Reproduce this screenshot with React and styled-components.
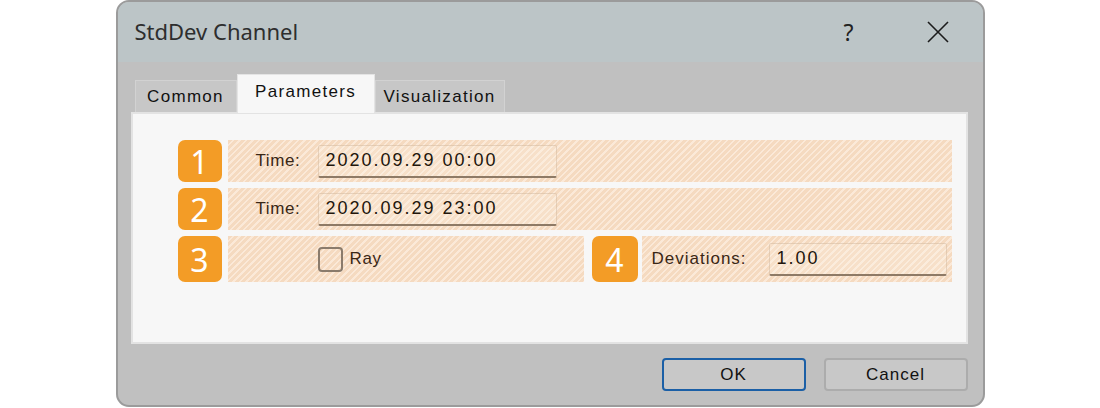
import React from "react";
import styled, { createGlobalStyle } from "styled-components";

const GlobalStyle = createGlobalStyle`
  body {
    margin: 0;
    background: #ffffff;
    font-family: "Liberation Sans", Arial, sans-serif;
  }
`;

const Page = styled.div`
  display: flex;
  justify-content: center;
  height: 408px;
`;

const Dialog = styled.div`
  width: 869px;
  height: 407px;
  box-sizing: border-box;
  border: 2px solid #9b9b9b;
  border-radius: 13px;
  overflow: hidden;
  display: flex;
  flex-direction: column;
  background: #c0c0c0;
`;

const TitleBar = styled.div`
  height: 60px;
  flex-shrink: 0;
  display: flex;
  align-items: center;
  padding: 0 22px 0 17px;
  background: #bcc5c7;
`;

const Title = styled.div`
  flex: 1;
  font-family: "Noto Sans", "Open Sans", sans-serif;
  font-size: 22px;
  color: #2e2e2e;
  margin-top: -2px;
`;

const TitleButton = styled.div`
  width: 46px;
  height: 40px;
  display: flex;
  align-items: center;
  justify-content: center;
  margin-left: ${(p) => p.gap || 0}px;
  font-family: "Noto Sans", sans-serif;
  font-size: 23px;
  color: #222;
`;

const Body = styled.div`
  flex: 1;
  display: flex;
  flex-direction: column;
  padding: 0 15px 0 13px;
`;

const Tabs = styled.div`
  display: flex;
  align-items: flex-end;
  height: 38px;
  margin-top: 12px;
  padding-left: 4px;
  position: relative;
  z-index: 1;
`;

const Tab = styled.div`
  box-sizing: border-box;
  width: ${(p) => p.w}px;
  height: ${(p) => (p.active ? 39 : 32)}px;
  margin-bottom: ${(p) => (p.active ? -1 : 0)}px;
  display: flex;
  align-items: center;
  justify-content: center;
  padding-bottom: ${(p) => (p.active ? 4 : 0)}px;
  background: ${(p) => (p.active ? "#f7f7f7" : "#c7c7c7")};
  border: 1px solid ${(p) => (p.active ? "#e4e4e4" : "#d2d2d2")};
  border-bottom: none;
  font-size: 17px;
  letter-spacing: 1.3px;
  color: #111;
`;

const Panel = styled.div`
  box-sizing: border-box;
  height: 232px;
  background: #f7f7f7;
  border: 2px solid #e3e3e3;
  padding: 26px 14px 0 45px;
  display: flex;
  flex-direction: column;
  gap: 6px;
`;

const Row = styled.div`
  display: flex;
  height: ${(p) => p.h || 42}px;
`;

const Badge = styled.div`
  width: ${(p) => p.w || 44}px;
  flex-shrink: 0;
  margin-left: ${(p) => p.ml || 0}px;
  border-radius: 7px;
  background: #f39c26;
  color: #ffffff;
  display: flex;
  align-items: center;
  justify-content: center;
  font-family: "Noto Sans", sans-serif;
  font-size: 32px;
  font-weight: 400;
`;

const Stripe = styled.div`
  box-sizing: border-box;
  width: ${(p) => (p.w ? `${p.w}px` : "auto")};
  flex: ${(p) => (p.w ? "none" : 1)};
  margin-left: ${(p) => p.ml ?? 6}px;
  display: flex;
  align-items: center;
  padding-left: ${(p) => p.pl}px;
  background: repeating-linear-gradient(
    135deg,
    #f5dac0 0px,
    #f5dac0 2.9px,
    #fbe9d8 2.9px,
    #fbe9d8 4.6px
  );
`;

const Label = styled.div`
  width: ${(p) => p.w}px;
  flex-shrink: 0;
  font-size: 17px;
  letter-spacing: ${(p) => p.ls || 0.6}px;
  color: #3a2716;
`;

const Input = styled.div`
  box-sizing: border-box;
  width: ${(p) => p.w}px;
  height: 33px;
  display: flex;
  align-items: center;
  padding-left: 7px;
  border: 1px solid rgba(190, 160, 130, 0.35);
  border-bottom: 2px solid #8e7a66;
  border-radius: 2px;
  background: rgba(255, 248, 240, 0.2);
  font-size: 18px;
  letter-spacing: 2px;
  color: #22160c;
`;

const Check = styled.div`
  box-sizing: border-box;
  width: 25px;
  height: 25px;
  border: 2px solid #8a7b6c;
  border-radius: 4px;
  margin-right: 7px;
`;

const Footer = styled.div`
  display: flex;
  justify-content: flex-end;
  gap: 18px;
  padding: 14px 0 0 0;
`;

const Button = styled.div`
  box-sizing: border-box;
  width: 144px;
  height: 33px;
  display: flex;
  align-items: center;
  justify-content: center;
  border-radius: 4px;
  border: ${(p) => (p.primary ? "2px solid #1b5fa6" : "2px solid #acacac")};
  background: #c8c8c8;
  font-size: 17px;
  letter-spacing: 1px;
  color: #111;
`;

const CloseIcon = () => (
  <svg width="22" height="22" viewBox="0 0 22 22">
    <path d="M1 1 L21 21 M21 1 L1 21" stroke="#1c1c1c" strokeWidth="1.6" fill="none" />
  </svg>
);

const App = () => (
  <Page>
    <GlobalStyle />
    <Dialog>
      <TitleBar>
        <Title>StdDev Channel</Title>
        <TitleButton>?</TitleButton>
        <TitleButton gap={43}>
          <CloseIcon />
        </TitleButton>
      </TitleBar>
      <Body>
        <Tabs>
          <Tab w={102}>Common</Tab>
          <Tab w={138} active>
            Parameters
          </Tab>
          <Tab w={130}>Visualization</Tab>
        </Tabs>
        <Panel>
          <Row>
            <Badge>1</Badge>
            <Stripe pl={28}>
              <Label w={62}>Time:</Label>
              <Input w={239}>2020.09.29 00:00</Input>
            </Stripe>
          </Row>
          <Row>
            <Badge>2</Badge>
            <Stripe pl={28}>
              <Label w={62}>Time:</Label>
              <Input w={239}>2020.09.29 23:00</Input>
            </Stripe>
          </Row>
          <Row h={46}>
            <Badge>3</Badge>
            <Stripe w={356} pl={90}>
              <Check />
              <Label w={40}>Ray</Label>
            </Stripe>
            <Badge w={46} ml={8}>
              4
            </Badge>
            <Stripe ml={4} pl={10}>
              <Label w={117} ls={1}>
                Deviations:
              </Label>
              <Input w={178}>1.00</Input>
            </Stripe>
          </Row>
        </Panel>
        <Footer>
          <Button primary>OK</Button>
          <Button>Cancel</Button>
        </Footer>
      </Body>
    </Dialog>
  </Page>
);

export default App;
